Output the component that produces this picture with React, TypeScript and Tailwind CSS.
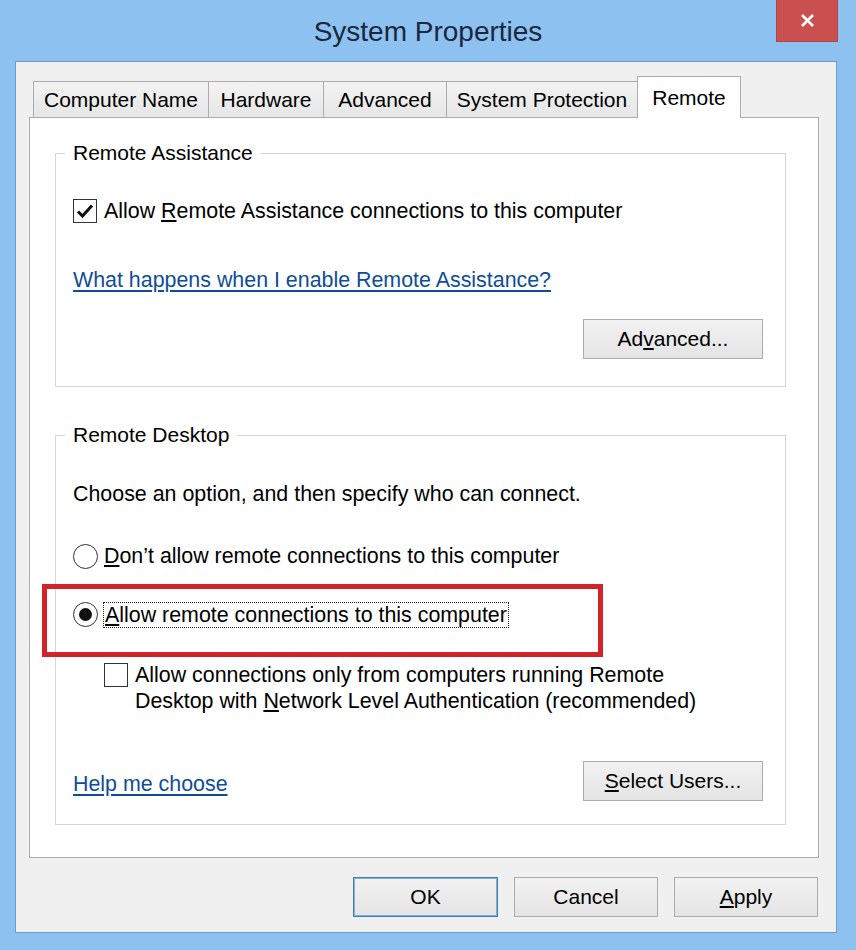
import type { ReactNode } from "react";

function CheckBox({ checked }: { checked?: boolean }) {
  return (
    <span className="flex h-[24px] w-[24px] shrink-0 items-center justify-center border border-[#333333] bg-white">
      {checked && (
        <svg width="18" height="16" viewBox="0 0 18 16">
          <path d="M2 8.5 L6.5 13 L16 2.5" fill="none" stroke="#111" strokeWidth="3" />
        </svg>
      )}
    </span>
  );
}

function Radio({ checked }: { checked?: boolean }) {
  return (
    <span className="flex h-[25px] w-[25px] shrink-0 items-center justify-center rounded-full border border-[#333333] bg-white">
      {checked && <span className="h-[13px] w-[13px] rounded-full bg-[#111]" />}
    </span>
  );
}

function Btn({ children, w, focused }: { children: ReactNode; w: string; focused?: boolean }) {
  return (
    <button
      className={`flex h-[40px] ${w} items-center justify-center border bg-linear-to-b from-[#f2f2f2] to-[#e4e4e4] text-[21px] text-black ${
        focused ? "border-[#3c7fb1] shadow-[inset_0_0_0_1px_#7fb3de]" : "border-[#acacac]"
      }`}
    >
      {children}
    </button>
  );
}

function Tab({ label, w, selected }: { label: string; w: string; selected?: boolean }) {
  if (selected) {
    return (
      <div className={`relative z-10 -mb-px flex h-[42px] ${w} items-center justify-center border-x border-t border-[#acacac] bg-white`}>
        {label}
      </div>
    );
  }
  return (
    <div className={`flex h-[36px] ${w} items-center justify-center border-l border-t border-[#acacac] bg-linear-to-b from-[#f3f3f3] to-[#e6e6e6]`}>
      {label}
    </div>
  );
}

export default function App() {
  return (
    <div className="flex h-[950px] w-[856px] flex-col bg-[#8dc1ef] font-['Liberation_Sans',Arial,sans-serif] text-[21px] text-black">
      {/* Title bar */}
      <div className="grid h-[61px] shrink-0 grid-cols-[1fr_auto_1fr]">
        <div />
        <div className="self-center pt-[3px] text-[28px] leading-none text-[#1a2740]">System Properties</div>
        <div className="mr-[18px] flex h-[42px] w-[62px] items-center justify-center self-start justify-self-end border-x border-b border-[#b04543] bg-[#c9504e]">
          <svg width="15" height="15" viewBox="0 0 15 15">
            <path d="M2 2 L13 13 M13 2 L2 13" stroke="#fff" strokeWidth="2.6" />
          </svg>
        </div>
      </div>

      {/* Client area */}
      <div className="ml-[15px] flex h-[872px] w-[822px] flex-col border border-[#6b9bd0] bg-[#f0f0f0] pl-[13px] pt-[14px]">
        {/* Tabs */}
        <div className="flex h-[41px] items-end pl-[4px]">
          <Tab label="Computer Name" w="w-[175px]" />
          <Tab label="Hardware" w="w-[115px]" />
          <Tab label="Advanced" w="w-[123px]" />
          <Tab label="System Protection" w="w-[191px]" />
          <Tab label="Remote" w="w-[104px]" selected />
        </div>

        {/* Tab panel */}
        <div className="flex h-[741px] w-[790px] flex-col border border-[#acacac] bg-white pl-[25px] pt-[23px] text-[21.4px]">
          <fieldset className="w-[731px] border border-[#d5d5d5]">
            <legend className="ml-[9px] px-[8px] text-[21px] leading-[24px]">Remote Assistance</legend>
            <div className="flex flex-col pb-[27px] pl-[17px] pr-[22px]">
              <label className="mt-[34px] flex h-[24px] items-center gap-[7px]">
                <CheckBox checked />
                <span>
                  Allow <u>R</u>emote Assistance connections to this computer
                </span>
              </label>
              <a className="mt-[45px] h-[24px] self-start leading-[24px] text-[#0f4d98] underline underline-offset-[3px]">
                What happens when I enable Remote Assistance?
              </a>
              <div className="mt-[27px] self-end">
                <Btn w="w-[180px]">
                  Ad<u>v</u>anced...
                </Btn>
              </div>
            </div>
          </fieldset>

          <fieldset className="mt-[36px] w-[731px] border border-[#d5d5d5]">
            <legend className="ml-[9px] px-[8px] text-[21px] leading-[24px]">Remote Desktop</legend>
            <div className="flex flex-col pb-[23px] pl-[17px] pr-[22px]">
              <p className="mt-[35px] leading-[24px]">Choose an option, and then specify who can connect.</p>

              <label className="mt-[38px] flex h-[25px] items-center gap-[6px]">
                <Radio />
                <span>
                  <u>D</u>on’t allow remote connections to this computer
                </span>
              </label>

              <label className="relative mt-[33px] flex h-[25px] items-center gap-[5px]">
                <Radio checked />
                <span className="border border-dotted border-[#222] px-[1px] leading-[24px]">
                  <u>A</u>llow remote connections to this computer
                </span>
                <span className="pointer-events-none absolute left-[-31px] top-[-18px] h-[73px] w-[561px] border-[5px] border-[#d2222a]" />
              </label>

              <label className="ml-[31px] mt-[35px] flex items-start gap-[7px]">
                <span className="mt-[1px]">
                  <CheckBox />
                </span>
                <span className="leading-[26px]">
                  Allow connections only from computers running Remote
                  <br />
                  Desktop with <u>N</u>etwork Level Authentication (recommended)
                </span>
              </label>

              <div className="mt-[47px] flex h-[40px] items-center justify-between">
                <a className="pt-[6px] leading-[24px] text-[#0f4d98] underline underline-offset-[3px]">Help me choose</a>
                <Btn w="w-[180px]">
                  <u>S</u>elect Users...
                </Btn>
              </div>
            </div>
          </fieldset>
        </div>

        {/* Dialog buttons */}
        <div className="mt-[19px] flex w-[790px] justify-end gap-[16px] pr-[1px]">
          <Btn w="w-[145px]" focused>
            OK
          </Btn>
          <Btn w="w-[144px]">Cancel</Btn>
          <Btn w="w-[144px]">
            <u>A</u>pply
          </Btn>
        </div>
      </div>
    </div>
  );
}
